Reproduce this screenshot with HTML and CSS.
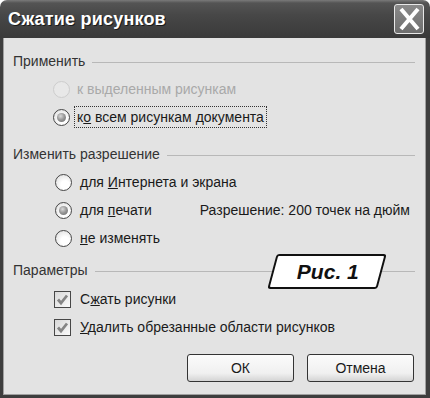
FILE: index.html
```html
<!DOCTYPE html>
<html lang="ru">
<head>
<meta charset="utf-8">
<title>Сжатие рисунков</title>
<link rel="stylesheet" href="styles.css">
</head>
<body>
<div class="window">
  <div class="titlebar">
    <span class="title">Сжатие рисунков</span>
    <div class="close">
      <svg width="28" height="28" viewBox="0 0 28 28"><path d="M6 4 L23 24 M23 4 L6 24" stroke="#fff" stroke-width="4" stroke-linecap="butt" fill="none"/></svg>
    </div>
  </div>
  <div class="body">
    <div class="group g1">
      <div class="ghead"><span>Применить</span><i class="line"></i></div>
      <div class="opt disabled"><span class="radio"></span><span class="lbl">к выделенным рисункам</span></div>
      <div class="opt"><span class="radio checked"></span><span class="lbl focus">к<u>о</u> всем рисункам документа</span></div>
    </div>
    <div class="group g2">
      <div class="ghead"><span>Изменить разрешение</span><i class="line"></i></div>
      <div class="opt"><span class="radio"></span><span class="lbl">для <u>И</u>нтернета и экрана</span></div>
      <div class="opt"><span class="radio checked"></span><span class="lbl">для <u>п</u>ечати</span><span class="res">Разрешение: 200 точек на дюйм</span></div>
      <div class="opt"><span class="radio"></span><span class="lbl"><u>н</u>е изменять</span></div>
    </div>
    <div class="group g3">
      <div class="ghead"><span>Параметры</span><i class="line"></i></div>
      <div class="opt"><span class="check"><svg width="15" height="15" viewBox="0 0 15 15"><path d="M3 7.5 L6 11 L12 3.5" stroke="#858585" stroke-width="2.8" fill="none"/></svg></span><span class="lbl">С<u>ж</u>ать рисунки</span></div>
      <div class="opt"><span class="check"><svg width="15" height="15" viewBox="0 0 15 15"><path d="M3 7.5 L6 11 L12 3.5" stroke="#858585" stroke-width="2.8" fill="none"/></svg></span><span class="lbl"><u>У</u>далить обрезанные области рисунков</span></div>
    </div>
    <div class="buttons">
      <button class="btn">ОК</button>
      <button class="btn">Отмена</button>
    </div>
  </div>
  <div class="badge"><span>Рис. 1</span></div>
</div>
</body>
</html>
```
FILE: styles.css
```css
html, body {
  margin: 0;
  background: #ffffff;
}
.window {
  width: 430px;
  height: 398px;
  position: relative;
  display: flex;
  flex-direction: column;
  font-family: "Liberation Sans", Arial, sans-serif;
  font-size: 14px;
  color: #1a1a1a;
}
.titlebar {
  height: 38px;
  flex: none;
  box-sizing: border-box;
  display: flex;
  align-items: center;
  justify-content: space-between;
  padding: 0 6px 0 8px;
  border-radius: 7px 7px 0 0;
  background: linear-gradient(#7a7a7a 0, #545454 3px, #474747 40%, #3a3a3a 100%);
}
.title {
  color: #fff;
  font-weight: bold;
  font-size: 18px;
  letter-spacing: 0.2px;
  text-shadow: 1px 1px 0 #1a1a1a;
  padding-top: 1px;
}
.close {
  width: 30px;
  height: 30px;
  box-sizing: border-box;
  border: 1px solid #e8e8e8;
  border-radius: 3px;
  background: linear-gradient(#8a8a8a, #6e6e6e);
  display: flex;
  align-items: center;
  justify-content: center;
}
.body {
  flex: 1;
  background: #e3e3e3;
  border-style: solid;
  border-color: #3e3e3e;
  border-width: 0 4px 3px 3px;
  box-shadow: inset 1px 0 0 #a0a0a0, inset -1px 0 0 #a0a0a0, inset 0 -1px 0 #a0a0a0;
  display: flex;
  flex-direction: column;
}
.ghead {
  height: 20px;
  display: flex;
  align-items: center;
  gap: 7px;
  padding: 0 11px 0 10px;
  color: #333;
  margin-bottom: 4px;
}
.ghead .line {
  flex: 1;
  height: 0;
  border-top: 1px solid #b8b8b8;
  margin-top: 2px;
}
.g1 { padding-top: 13px; }
.g2 { margin-top: 13px; }
.g3 { margin-top: 8px; }
.g3 .ghead { margin-bottom: 5px; }
.opt {
  height: 28px;
  display: flex;
  align-items: center;
  padding-left: 50px;
  gap: 4px;
}
.g2 .opt { padding-left: 52px; gap: 5px; }
.g3 .opt { padding-left: 51px; gap: 6px; }
.lbl {
  padding: 1px 2px;
  line-height: 18px;
  border: 1px solid transparent;
}
.lbl.focus {
  border: 1px dotted #333;
}
.disabled .lbl { color: #a9a9a9; }
.radio {
  width: 17px;
  height: 17px;
  box-sizing: border-box;
  border-radius: 50%;
  border: 1px solid #474747;
  background: radial-gradient(circle at 60% 65%, #ffffff 30%, #d8d8d8 100%);
  display: flex;
  align-items: center;
  justify-content: center;
  flex: none;
}
.disabled .radio {
  border-color: #cdcdcd;
  background: #e8e8e8;
}
.radio.checked::after {
  content: "";
  width: 9px;
  height: 9px;
  border-radius: 50%;
  background: radial-gradient(circle at 40% 35%, #dadada 0, #9a9a9a 45%, #666 100%);
}
.check {
  width: 17px;
  height: 17px;
  box-sizing: border-box;
  border: 1px solid #474747;
  background: linear-gradient(135deg, #d8d8d8, #fafafa);
  display: flex;
  align-items: center;
  justify-content: center;
  flex: none;
}
.res {
  margin-left: 40px;
}
.buttons {
  display: flex;
  justify-content: flex-end;
  gap: 13px;
  padding-right: 12px;
  margin-top: 13px;
}
.btn {
  width: 107px;
  height: 28px;
  box-sizing: border-box;
  border: 1px solid #343434;
  border-radius: 3px;
  background: linear-gradient(#fbfbfb 0, #f0f0f0 70%, #d4d4d4 100%);
  font-family: "Liberation Sans", Arial, sans-serif;
  font-size: 14px;
  color: #1a1a1a;
  padding: 0;
}
.badge {
  position: absolute;
  left: 272px;
  top: 254px;
  width: 110px;
  height: 35px;
  box-sizing: border-box;
  border: 2px solid #111;
  border-radius: 3px;
  background: #fff;
  transform: skewX(-15deg);
  display: flex;
  align-items: center;
  justify-content: center;
}
.badge span {
  transform: skewX(15deg);
  font-weight: bold;
  font-style: italic;
  font-size: 21px;
  color: #111;
  padding-left: 2px;
}
```
